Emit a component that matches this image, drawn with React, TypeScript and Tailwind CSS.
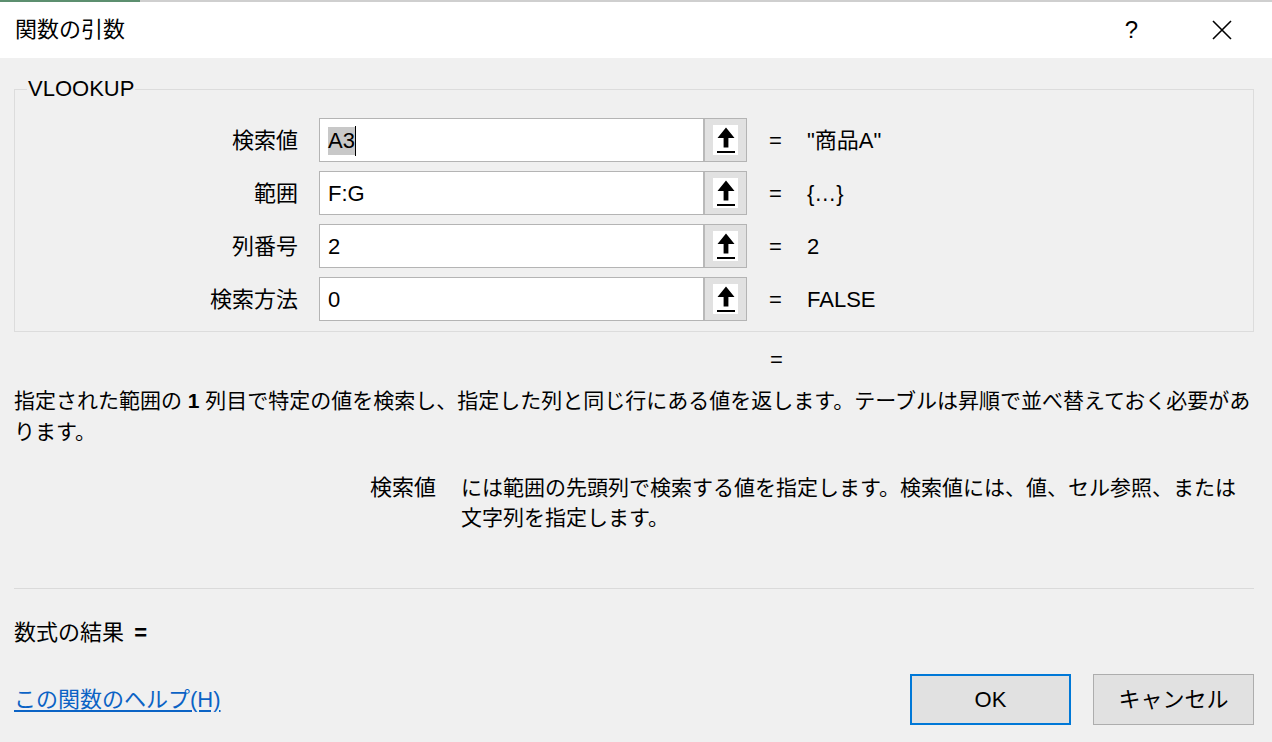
import React from 'react';

const rows = [
    { label: '検索値', value: 'A3', result: '"商品A"', selected: true },
    { label: '範囲', value: 'F:G', result: '{…}' },
    { label: '列番号', value: '2', result: '2' },
    { label: '検索方法', value: '0', result: 'FALSE' },
];

const RefButton = () => (
    <div className="w-[43px] h-full bg-[#e1e1e1] border-l-2 border-[#b9b9b9] flex items-center justify-center">
        <div className="w-[25px] h-[30px] bg-white flex items-center justify-center">
            <svg width="22" height="28" viewBox="0 0 22 28">
                <path d="M11 1.5 L2.5 12 L8.6 12 L8.6 21.5 L13.4 21.5 L13.4 12 L19.5 12 Z" fill="#000" />
                <rect x="2" y="25" width="18" height="2" fill="#000" />
            </svg>
        </div>
    </div>
);

const App: React.FC = () => {
    return (
        <div className="w-[1272px] h-[742px] overflow-hidden bg-[#f0f0f0] text-black font-['Liberation_Sans','Noto_Sans_CJK_JP',sans-serif] text-[22px]">
            {/* excel behind the dialog */}
            <div className="h-[2px] flex">
                <div className="w-[140px] bg-[#5c8f6f]" />
                <div className="flex-1 bg-[#cfcfcf]" />
            </div>

            {/* title bar */}
            <div className="h-[56px] bg-white flex items-center pl-[15px]">
                <span className="leading-none">関数の引数</span>
                <span className="ml-auto leading-none text-[24px]">?</span>
                <div className="ml-[74px] mr-[40px] w-[20px] h-[20px]">
                    <svg width="20" height="20" viewBox="0 0 20 20">
                        <path d="M1 1 L19 19 M19 1 L1 19" stroke="#000" strokeWidth="1.6" />
                    </svg>
                </div>
            </div>

            <div className="px-[14px]">
                <fieldset className="mt-[16px] w-[1240px] border border-[#dcdcdc] pt-[14px] pb-[10px]">
                    <legend className="ml-[12px] px-[1px] leading-[30px]">VLOOKUP</legend>
                    <div className="flex flex-col gap-[9px]">
                        {rows.map((row) => (
                            <div key={row.label} className="flex items-center h-[44px]">
                                <div className="w-[283px] text-right leading-none pt-[2px]">{row.label}</div>
                                <div className="ml-[21px] w-[428px] h-[44px] border border-[#b4b4b4] bg-white flex">
                                    <div className="flex-1 flex items-center pl-[8px] pt-[2px]">
                                        {row.selected ? (
                                            <>
                                                <span className="bg-[#c8c8c8] leading-[28px]">{row.value}</span>
                                                <span className="w-px h-[30px] bg-black" />
                                            </>
                                        ) : (
                                            <span className="leading-[28px]">{row.value}</span>
                                        )}
                                    </div>
                                    <RefButton />
                                </div>
                                <div className="ml-[22px] w-[16px] leading-none pt-[2px]">=</div>
                                <div className="ml-[22px] leading-none pt-[2px]">{row.result}</div>
                            </div>
                        ))}
                    </div>
                </fieldset>

                <div className="mt-[14px] h-[28px] leading-[28px] pl-[756px]">=</div>

                <p className="mt-[11px] text-[21px] leading-[31px] whitespace-nowrap">
                    指定された範囲の <span className="font-bold">1</span> 列目で特定の値を検索し、指定した列と同じ行にある値を返します。テーブルは昇順で並べ替えておく必要があ
                    <br />
                    ります。
                </p>

                <div className="mt-[26px] flex pl-[356px] leading-[30px]">
                    <div className="w-[91px] shrink-0">検索値</div>
                    <p className="text-[21px] whitespace-nowrap">
                        には範囲の先頭列で検索する値を指定します。検索値には、値、セル参照、または
                        <br />
                        文字列を指定します。
                    </p>
                </div>

                <div className="mt-[55px] h-px w-[1240px] bg-[#dadada]" />

                <div className="mt-[29px] leading-[30px]">
                    数式の結果 <span className="ml-[4px] font-bold">=</span>
                </div>

                <div className="mt-[26px] w-[1240px] flex items-center">
                    <a href="#" className="text-[#0b63c5] underline underline-offset-[3px] leading-none">この関数のヘルプ(H)</a>
                    <button className="ml-auto w-[161px] h-[51px] bg-[#e1e1e1] border-2 border-[#0078d7]">OK</button>
                    <button className="ml-[22px] w-[161px] h-[51px] bg-[#e1e1e1] border border-[#adadad]">キャンセル</button>
                </div>
            </div>
        </div>
    );
};

export default App;
